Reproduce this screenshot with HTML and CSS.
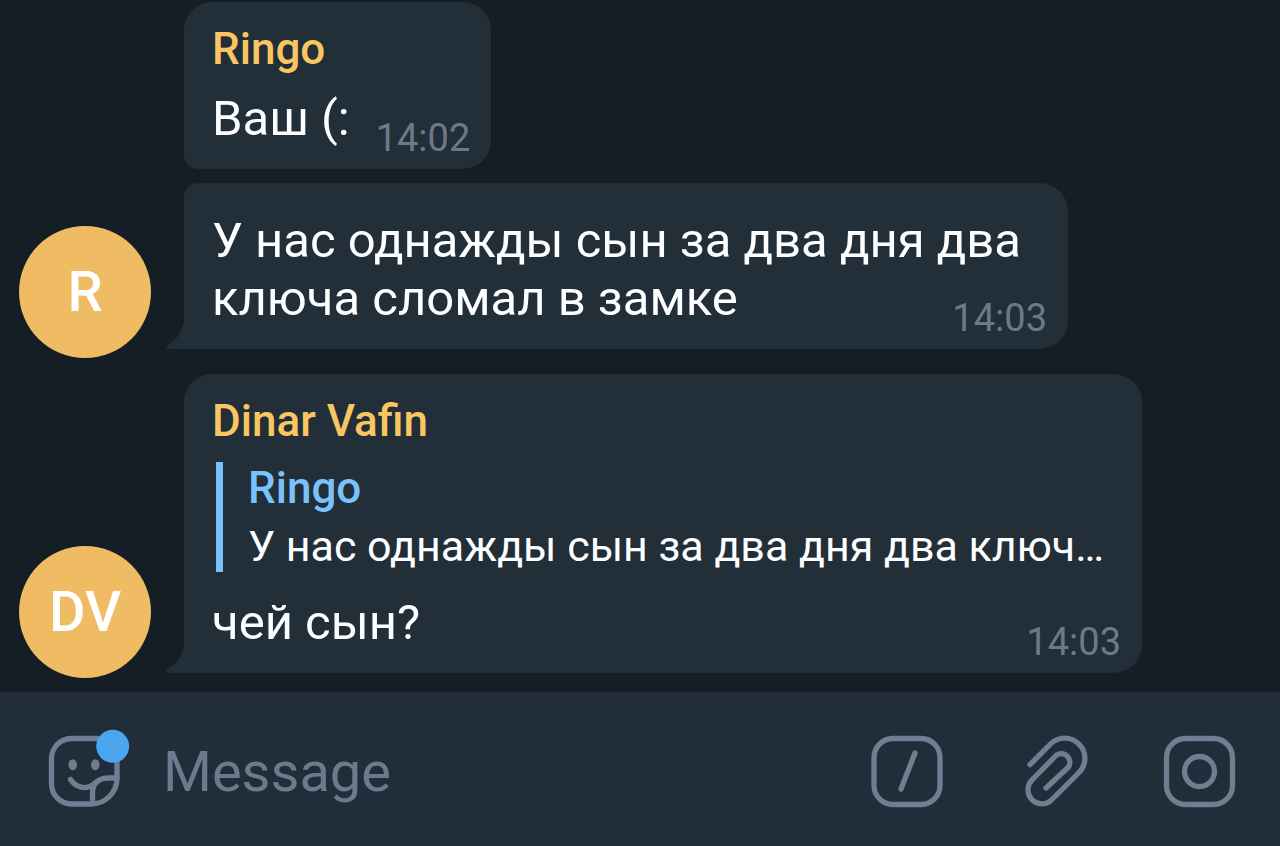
FILE: index.html
```html
<!DOCTYPE html>
<html lang="ru">
<head>
<meta charset="utf-8">
<meta name="viewport" content="width=device-width, initial-scale=1">
<title>Chat</title>
<link rel="stylesheet" href="styles.css">
</head>
<body>
<main class="chat">
  <article class="row">
    <div class="bubble bubble-first bubble-short">
      <h2 class="name">Ringo</h2>
      <p class="text">Ваш (:<time class="time" datetime="14:02">14:02</time></p>
    </div>
  </article>
  <article class="row">
    <div class="avatar">R</div>
    <div class="bubble bubble-last bubble-plain">
      <p class="text">У нас однажды сын за два дня два ключа сломал в замке<time class="time" datetime="14:03">14:03</time></p>
      <svg class="tail" viewBox="0 0 19 32" aria-hidden="true"><path d="M19 0H18C18 12 12 22 2 28C-1 30 0 32 3 32H19Z"/></svg>
    </div>
  </article>
  <article class="row row-group">
    <div class="avatar">DV</div>
    <div class="bubble bubble-first bubble-last bubble-wide">
      <h2 class="name">Dinar Vafin</h2>
      <blockquote class="quote">
        <p class="quote-name">Ringo</p>
        <p class="quote-text">У нас однажды сын за два дня два ключ…</p>
      </blockquote>
      <p class="text">чей сын?<time class="time" datetime="14:03">14:03</time></p>
      <svg class="tail" viewBox="0 0 19 32" aria-hidden="true"><path d="M19 0H18C18 12 12 22 2 28C-1 30 0 32 3 32H19Z"/></svg>
    </div>
  </article>
</main>
<form class="composer">
  <button class="icon-button" type="button" aria-label="Stickers">
    <svg class="icon" viewBox="0 0 72 72" aria-hidden="true">
      <path d="M69 23V42C69 56 58 68 43 68H23A20 20 0 0 1 3.500 48V23A20 20 0 0 1 23 2.500H49A20 20 0 0 1 69 23Z"/>
      <path d="M22.500 43.500C28 51.500 38 54.500 46 48C51 43.500 54 42 60 42H69"/>
      <path d="M44.500 67V57C44.500 52 46 48 50 45"/>
      <ellipse class="solid" cx="24.700" cy="28.700" rx="4.300" ry="5.500"/>
      <ellipse class="solid" cx="47.300" cy="28.700" rx="4.300" ry="5.500"/>
      <circle class="dot" cx="64.700" cy="10.300" r="16.500"/>
    </svg>
  </button>
  <input class="field" type="text" placeholder="Message" aria-label="Message">
  <button class="icon-button" type="button" aria-label="Commands">
    <svg class="icon" viewBox="0 0 72 72" aria-hidden="true">
      <rect x="2" y="2.500" width="66" height="66" rx="19"/>
      <path d="M43 17L29 53"/>
    </svg>
  </button>
  <button class="icon-button" type="button" aria-label="Attach file">
    <svg class="icon" viewBox="0 0 72 72" aria-hidden="true">
      <path d="M12 28.700L32.500 8A20 20 0 0 1 61 36.500L33 64.500A14 14 0 0 1 13.500 44.500L38.500 19A8.700 8.700 0 0 1 50.500 31L28 52"/>
    </svg>
  </button>
  <button class="icon-button" type="button" aria-label="Camera">
    <svg class="icon" viewBox="0 0 72 72" aria-hidden="true">
      <rect x="2.500" y="2.500" width="66" height="66" rx="19"/>
      <circle cx="35.500" cy="35.500" r="15"/>
    </svg>
  </button>
</form>
</body>
</html>
```
FILE: styles.css
```css
* { box-sizing: border-box; }

body {
  margin: 0;
  min-height: 100vh;
  display: flex;
  flex-direction: column;
  background: #151d25;
  color: #fdfeff;
  font-family: Roboto, "Noto Sans", sans-serif;
}

h2, p, blockquote { margin: 0; }

.chat {
  flex: 1;
  display: flex;
  flex-direction: column;
  justify-content: flex-end;
  gap: 14px;
  padding: 2px 19px 14px;
}

.row {
  display: grid;
  grid-template-columns: 132px minmax(0, 1fr);
  column-gap: 33px;
  align-items: end;
}

.row-group { margin-top: 2px; }

.avatar {
  width: 132px;
  height: 132px;
  border-radius: 50%;
  display: flex;
  align-items: center;
  justify-content: center;
  background: #efbc64;
  color: #fff;
  font-size: 56px;
  font-weight: 500;
}

.bubble {
  grid-column: 2;
  position: relative;
  padding: 21px 21px 21px 28px;
  border-radius: 14px 28px 28px 14px;
  background: #222e38;
}

.bubble-first { border-top-left-radius: 28px; }
.bubble-last { border-bottom-left-radius: 0; margin-bottom: 9px; }
.bubble-short { justify-self: start; }
.bubble-plain { max-width: 884px; padding-top: 29px; }
.bubble-wide { max-width: 958px; margin-bottom: 5px; }

.tail {
  position: absolute;
  left: -18px;
  bottom: 0;
  width: 19px;
  height: 32px;
  fill: #222e38;
}

.name {
  margin-bottom: 15px;
  color: #f9c662;
  font-size: 44px;
  font-weight: 500;
  line-height: 52px;
}

.text {
  font-size: 49px;
  line-height: 58px;
}

/* Floats beside the last line and hangs into the bubble's bottom padding. */
.time {
  float: right;
  margin: 26px 0 -12px 26px;
  color: #6c7a88;
  font-size: 38px;
  line-height: 44px;
}

.quote {
  margin: 0 8px 22px 4px;
  padding-left: 25px;
  border-left: 7px solid #7ac2fb;
}

.quote-name,
.quote-text {
  line-height: 52px;
}

.quote-name {
  margin-bottom: 6px;
  color: #7ac2fb;
  font-size: 44px;
  font-weight: 500;
}

.quote-text {
  overflow: hidden;
  font-size: 43px;
  white-space: nowrap;
  text-overflow: ellipsis;
}

.composer {
  display: flex;
  align-items: center;
  gap: 74px;
  padding: 44px 44px 38px 48px;
  background: #212d39;
}

.icon-button {
  flex: none;
  padding: 0;
  border: 0;
  background: none;
}

.icon {
  display: block;
  width: 72px;
  height: 72px;
  overflow: visible;
  fill: none;
  stroke: #6e7f92;
  stroke-width: 5.3;
  stroke-linecap: round;
  stroke-linejoin: round;
}

.icon .solid { fill: #6e7f92; stroke: none; }
.icon .dot { fill: #4aa6ee; stroke: none; }

.field {
  flex: 1;
  min-width: 0;
  height: 72px;
  margin-left: -34px;
  padding: 0 0 0 3px;
  border: 0;
  outline: 0;
  background: none;
  color: #fdfeff;
  font: 56px Roboto, "Noto Sans", sans-serif;
}

.field::placeholder { color: #6b7b8e; opacity: 1; }
```
